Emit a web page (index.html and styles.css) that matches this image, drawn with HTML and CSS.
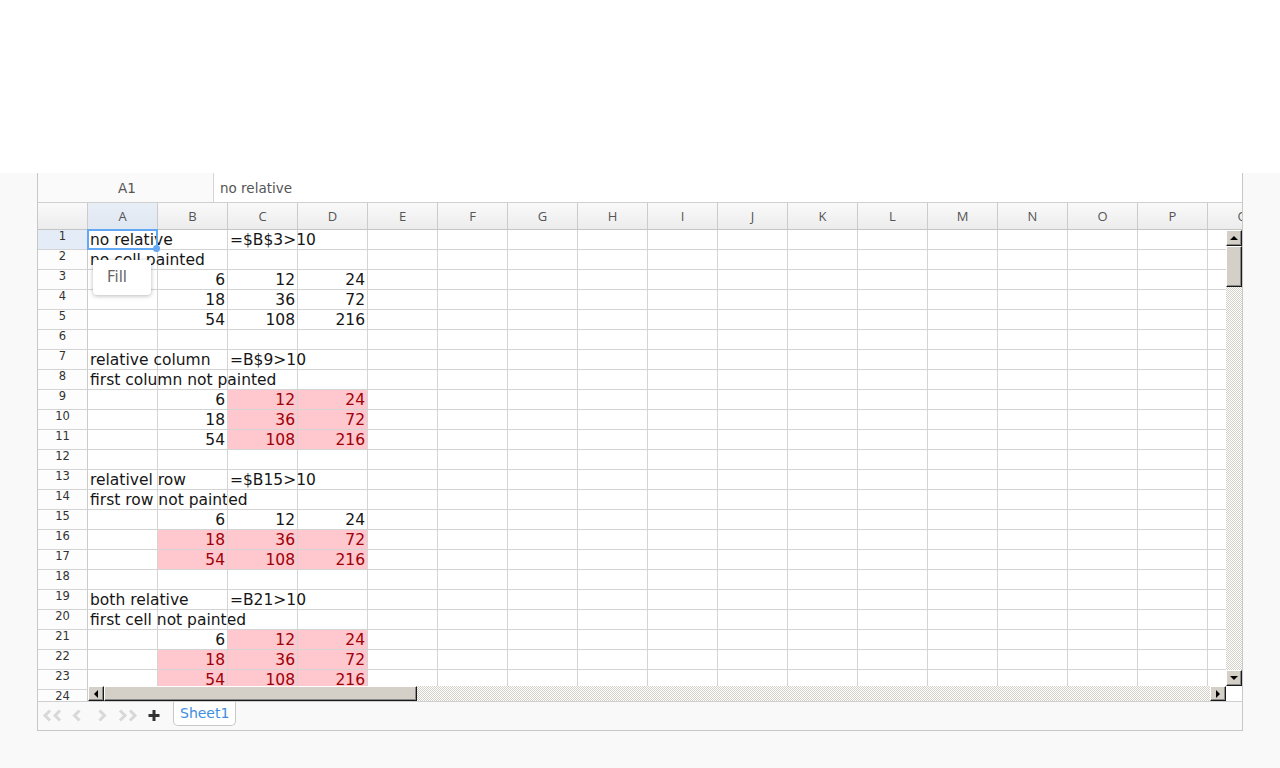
FILE: index.html
```html
<!DOCTYPE html>
<html>
<head>
<meta charset="utf-8">
<title>Sheet</title>
<link rel="stylesheet" href="styles.css">
</head>
<body>
<div class="top"></div>
<div class="stage">
  <div class="sheet">
    <div class="fbar">
      <div class="namebox">A1</div>
      <div class="formula">no relative</div>
    </div>
    <div class="view">
      <div class="grid">
        <div class="h corner"></div><div class="h hs">A</div><div class="h">B</div><div class="h">C</div><div class="h">D</div><div class="h">E</div><div class="h">F</div><div class="h">G</div><div class="h">H</div><div class="h">I</div><div class="h">J</div><div class="h">K</div><div class="h">L</div><div class="h">M</div><div class="h">N</div><div class="h">O</div><div class="h">P</div><div class="h">Q</div>

        <div class="r rs">1</div><div class="c sel">no relative<div class="selbox"></div><div class="handle"></div><div class="popup">Fill</div></div><div class="c"></div><div class="c">=$B$3&gt;10</div><div class="c"></div><div class="c"></div><div class="c"></div><div class="c"></div><div class="c"></div><div class="c"></div><div class="c"></div><div class="c"></div><div class="c"></div><div class="c"></div><div class="c"></div><div class="c"></div><div class="c"></div><div class="c"></div>
        <div class="r">2</div><div class="c">no cell painted</div><div class="c"></div><div class="c"></div><div class="c"></div><div class="c"></div><div class="c"></div><div class="c"></div><div class="c"></div><div class="c"></div><div class="c"></div><div class="c"></div><div class="c"></div><div class="c"></div><div class="c"></div><div class="c"></div><div class="c"></div><div class="c"></div>
        <div class="r">3</div><div class="c"></div><div class="c n">6</div><div class="c n">12</div><div class="c n">24</div><div class="c"></div><div class="c"></div><div class="c"></div><div class="c"></div><div class="c"></div><div class="c"></div><div class="c"></div><div class="c"></div><div class="c"></div><div class="c"></div><div class="c"></div><div class="c"></div><div class="c"></div>
        <div class="r">4</div><div class="c"></div><div class="c n">18</div><div class="c n">36</div><div class="c n">72</div><div class="c"></div><div class="c"></div><div class="c"></div><div class="c"></div><div class="c"></div><div class="c"></div><div class="c"></div><div class="c"></div><div class="c"></div><div class="c"></div><div class="c"></div><div class="c"></div><div class="c"></div>
        <div class="r">5</div><div class="c"></div><div class="c n">54</div><div class="c n">108</div><div class="c n">216</div><div class="c"></div><div class="c"></div><div class="c"></div><div class="c"></div><div class="c"></div><div class="c"></div><div class="c"></div><div class="c"></div><div class="c"></div><div class="c"></div><div class="c"></div><div class="c"></div><div class="c"></div>
        <div class="r">6</div><div class="c"></div><div class="c"></div><div class="c"></div><div class="c"></div><div class="c"></div><div class="c"></div><div class="c"></div><div class="c"></div><div class="c"></div><div class="c"></div><div class="c"></div><div class="c"></div><div class="c"></div><div class="c"></div><div class="c"></div><div class="c"></div><div class="c"></div>
        <div class="r">7</div><div class="c">relative column</div><div class="c"></div><div class="c">=B$9&gt;10</div><div class="c"></div><div class="c"></div><div class="c"></div><div class="c"></div><div class="c"></div><div class="c"></div><div class="c"></div><div class="c"></div><div class="c"></div><div class="c"></div><div class="c"></div><div class="c"></div><div class="c"></div><div class="c"></div>
        <div class="r">8</div><div class="c">first column not painted</div><div class="c"></div><div class="c"></div><div class="c"></div><div class="c"></div><div class="c"></div><div class="c"></div><div class="c"></div><div class="c"></div><div class="c"></div><div class="c"></div><div class="c"></div><div class="c"></div><div class="c"></div><div class="c"></div><div class="c"></div><div class="c"></div>
        <div class="r">9</div><div class="c"></div><div class="c n">6</div><div class="c n p">12</div><div class="c n p">24</div><div class="c"></div><div class="c"></div><div class="c"></div><div class="c"></div><div class="c"></div><div class="c"></div><div class="c"></div><div class="c"></div><div class="c"></div><div class="c"></div><div class="c"></div><div class="c"></div><div class="c"></div>
        <div class="r">10</div><div class="c"></div><div class="c n">18</div><div class="c n p">36</div><div class="c n p">72</div><div class="c"></div><div class="c"></div><div class="c"></div><div class="c"></div><div class="c"></div><div class="c"></div><div class="c"></div><div class="c"></div><div class="c"></div><div class="c"></div><div class="c"></div><div class="c"></div><div class="c"></div>
        <div class="r">11</div><div class="c"></div><div class="c n">54</div><div class="c n p">108</div><div class="c n p">216</div><div class="c"></div><div class="c"></div><div class="c"></div><div class="c"></div><div class="c"></div><div class="c"></div><div class="c"></div><div class="c"></div><div class="c"></div><div class="c"></div><div class="c"></div><div class="c"></div><div class="c"></div>
        <div class="r">12</div><div class="c"></div><div class="c"></div><div class="c"></div><div class="c"></div><div class="c"></div><div class="c"></div><div class="c"></div><div class="c"></div><div class="c"></div><div class="c"></div><div class="c"></div><div class="c"></div><div class="c"></div><div class="c"></div><div class="c"></div><div class="c"></div><div class="c"></div>
        <div class="r">13</div><div class="c">relativel row</div><div class="c"></div><div class="c">=$B15&gt;10</div><div class="c"></div><div class="c"></div><div class="c"></div><div class="c"></div><div class="c"></div><div class="c"></div><div class="c"></div><div class="c"></div><div class="c"></div><div class="c"></div><div class="c"></div><div class="c"></div><div class="c"></div><div class="c"></div>
        <div class="r">14</div><div class="c">first row not painted</div><div class="c"></div><div class="c"></div><div class="c"></div><div class="c"></div><div class="c"></div><div class="c"></div><div class="c"></div><div class="c"></div><div class="c"></div><div class="c"></div><div class="c"></div><div class="c"></div><div class="c"></div><div class="c"></div><div class="c"></div><div class="c"></div>
        <div class="r">15</div><div class="c"></div><div class="c n">6</div><div class="c n">12</div><div class="c n">24</div><div class="c"></div><div class="c"></div><div class="c"></div><div class="c"></div><div class="c"></div><div class="c"></div><div class="c"></div><div class="c"></div><div class="c"></div><div class="c"></div><div class="c"></div><div class="c"></div><div class="c"></div>
        <div class="r">16</div><div class="c"></div><div class="c n p">18</div><div class="c n p">36</div><div class="c n p">72</div><div class="c"></div><div class="c"></div><div class="c"></div><div class="c"></div><div class="c"></div><div class="c"></div><div class="c"></div><div class="c"></div><div class="c"></div><div class="c"></div><div class="c"></div><div class="c"></div><div class="c"></div>
        <div class="r">17</div><div class="c"></div><div class="c n p">54</div><div class="c n p">108</div><div class="c n p">216</div><div class="c"></div><div class="c"></div><div class="c"></div><div class="c"></div><div class="c"></div><div class="c"></div><div class="c"></div><div class="c"></div><div class="c"></div><div class="c"></div><div class="c"></div><div class="c"></div><div class="c"></div>
        <div class="r">18</div><div class="c"></div><div class="c"></div><div class="c"></div><div class="c"></div><div class="c"></div><div class="c"></div><div class="c"></div><div class="c"></div><div class="c"></div><div class="c"></div><div class="c"></div><div class="c"></div><div class="c"></div><div class="c"></div><div class="c"></div><div class="c"></div><div class="c"></div>
        <div class="r">19</div><div class="c">both relative</div><div class="c"></div><div class="c">=B21&gt;10</div><div class="c"></div><div class="c"></div><div class="c"></div><div class="c"></div><div class="c"></div><div class="c"></div><div class="c"></div><div class="c"></div><div class="c"></div><div class="c"></div><div class="c"></div><div class="c"></div><div class="c"></div><div class="c"></div>
        <div class="r">20</div><div class="c">first cell not painted</div><div class="c"></div><div class="c"></div><div class="c"></div><div class="c"></div><div class="c"></div><div class="c"></div><div class="c"></div><div class="c"></div><div class="c"></div><div class="c"></div><div class="c"></div><div class="c"></div><div class="c"></div><div class="c"></div><div class="c"></div><div class="c"></div>
        <div class="r">21</div><div class="c"></div><div class="c n">6</div><div class="c n p">12</div><div class="c n p">24</div><div class="c"></div><div class="c"></div><div class="c"></div><div class="c"></div><div class="c"></div><div class="c"></div><div class="c"></div><div class="c"></div><div class="c"></div><div class="c"></div><div class="c"></div><div class="c"></div><div class="c"></div>
        <div class="r">22</div><div class="c"></div><div class="c n p">18</div><div class="c n p">36</div><div class="c n p">72</div><div class="c"></div><div class="c"></div><div class="c"></div><div class="c"></div><div class="c"></div><div class="c"></div><div class="c"></div><div class="c"></div><div class="c"></div><div class="c"></div><div class="c"></div><div class="c"></div><div class="c"></div>
        <div class="r">23</div><div class="c"></div><div class="c n p">54</div><div class="c n p">108</div><div class="c n p">216</div><div class="c"></div><div class="c"></div><div class="c"></div><div class="c"></div><div class="c"></div><div class="c"></div><div class="c"></div><div class="c"></div><div class="c"></div><div class="c"></div><div class="c"></div><div class="c"></div><div class="c"></div>
        <div class="r">24</div><div class="c"></div><div class="c"></div><div class="c"></div><div class="c"></div><div class="c"></div><div class="c"></div><div class="c"></div><div class="c"></div><div class="c"></div><div class="c"></div><div class="c"></div><div class="c"></div><div class="c"></div><div class="c"></div><div class="c"></div><div class="c"></div><div class="c"></div>
      </div>
      <div class="vscroll">
        <div class="sbtn up"></div>
        <div class="thumb vthumb"></div>
        <div class="track"></div>
        <div class="sbtn down"></div>
      </div>
      <div class="hscroll">
        <div class="sbtn left"></div>
        <div class="thumb hthumb"></div>
        <div class="track"></div>
        <div class="sbtn right"></div>
      </div>
      <div class="scorner"></div>
    </div>
    <div class="tabs">
      <svg class="nav nav-first" width="21" height="13" viewBox="0 0 21 13"><path d="M9 1.5 4 6.5l5 5M19 1.5l-5 5 5 5" fill="none" stroke="#d8d8d8" stroke-width="3"/></svg>
      <svg class="nav nav-prev" width="10" height="13" viewBox="0 0 10 13"><path d="M7.5 1.5 2.5 6.5l5 5" fill="none" stroke="#d8d8d8" stroke-width="3"/></svg>
      <svg class="nav nav-next" width="10" height="13" viewBox="0 0 10 13"><path d="M2.5 1.5l5 5-5 5" fill="none" stroke="#d8d8d8" stroke-width="3"/></svg>
      <svg class="nav nav-last" width="21" height="13" viewBox="0 0 21 13"><path d="M2 1.5l5 5-5 5M12 1.5l5 5-5 5" fill="none" stroke="#d8d8d8" stroke-width="3"/></svg>
      <svg class="nav nav-add" width="12" height="13" viewBox="0 0 12 13"><path d="M6 1v11M0.5 6.5h11" fill="none" stroke="#333" stroke-width="3"/></svg>
      <div class="tab">Sheet1</div>
    </div>
  </div>
</div>
</body>
</html>
```
FILE: styles.css
```css
* { box-sizing: border-box; }
html, body { margin: 0; padding: 0; }
body {
  background: #f9f9f9;
  font-family: "DejaVu Sans", sans-serif;
}
.top { height: 173px; background: #fff; }
.stage { padding-left: 37px; }
.sheet {
  width: 1206px;
  border: 1px solid #c8c8c8;
  border-top: 0;
}
.fbar {
  display: flex;
  height: 30px;
  background: #fff;
  border-bottom: 1px solid #cfcfcf;
  font-size: 13.5px;
  color: #555;
}
.namebox {
  width: 176px;
  border-right: 1px solid #d4d4d4;
  background: #fafafa;
  display: flex;
  align-items: center;
  justify-content: center;
  padding-left: 3px;
}
.formula {
  display: flex;
  align-items: center;
  padding-left: 6px;
}
.view {
  position: relative;
  height: 498px;
  overflow: hidden;
  background: #fff;
}
.grid {
  display: grid;
  grid-template-columns: 50px repeat(17, 70px);
  grid-template-rows: 27px repeat(24, 20px);
  width: 1240px;
}
.h {
  border-right: 1px solid #cbcbcb;
  border-bottom: 1px solid #c4c4c4;
  background: linear-gradient(#f9f9f9, #ececec);
  font-family: "Open Sans", sans-serif;
  font-size: 13px;
  color: #555;
  display: flex;
  align-items: center;
  justify-content: center;
}
.h.hs { background: linear-gradient(#e8eef6, #dfe7f2); }
.r {
  border-right: 1px solid #cbcbcb;
  border-bottom: 1px solid #d4d4d4;
  background: #fdfdfd;
  font-size: 11.5px;
  line-height: 13px;
  color: #333;
  text-align: center;
}
.r.rs { background: #e4ecf7; }
.c {
  border-right: 1px solid #d4d4d4;
  border-bottom: 1px solid #d4d4d4;
  padding: 0 2px;
  white-space: nowrap;
  font-size: 15.5px;
  line-height: 20px;
  color: #161616;
}
.c.n { text-align: right; }
.c.p { background: #ffc7ce; color: #9c0006; }
.c.sel { position: relative; }
.selbox {
  position: absolute;
  left: -1px;
  top: -1px;
  width: 71px;
  height: 21px;
  border: 2px solid #64a8f4;
  z-index: 2;
}
.handle {
  position: absolute;
  left: 65px;
  top: 15px;
  width: 7px;
  height: 7px;
  border-radius: 50%;
  background: #64a8f4;
  z-index: 3;
}
.popup {
  position: absolute;
  left: 5px;
  top: 30px;
  width: 58px;
  height: 35px;
  padding-left: 14px;
  background: #fff;
  border-radius: 4px;
  box-shadow: 0 1px 4px rgba(0, 0, 0, 0.28);
  font-size: 15px;
  line-height: 35px;
  color: #666;
  z-index: 4;
}
.vscroll {
  position: absolute;
  left: 1188px;
  top: 27px;
  width: 16px;
  height: 456px;
  display: flex;
  flex-direction: column;
}
.hscroll {
  position: absolute;
  left: 50px;
  top: 483px;
  width: 1138px;
  height: 15px;
  display: flex;
}
.track {
  flex: 1;
  background: repeating-conic-gradient(#d4d0c8 0 25%, #fff 0 50%) 0 0 / 2px 2px;
}
.sbtn, .thumb {
  flex: none;
  background: #d4d0c8;
  border: 1px solid;
  border-color: #fff #1a1a1a #1a1a1a #fff;
  box-shadow: inset -1px -1px #8a8a8a;
  display: flex;
  align-items: center;
  justify-content: center;
}
.vscroll .sbtn { height: 16px; }
.hscroll .sbtn { width: 16px; }
.vthumb { height: 41px; }
.hthumb { width: 313px; }
.sbtn::after { content: ""; width: 0; height: 0; }
.up::after { border-left: 4px solid transparent; border-right: 4px solid transparent; border-bottom: 4px solid #000; }
.down::after { border-left: 4px solid transparent; border-right: 4px solid transparent; border-top: 4px solid #000; }
.left::after { border-top: 4px solid transparent; border-bottom: 4px solid transparent; border-right: 4px solid #000; }
.right::after { border-top: 4px solid transparent; border-bottom: 4px solid transparent; border-left: 4px solid #000; }
.scorner {
  position: absolute;
  left: 1188px;
  top: 483px;
  width: 16px;
  height: 15px;
  background: #fff;
}
.tabs {
  height: 29px;
  border-top: 1px solid #cfcfcf;
  display: flex;
  align-items: flex-start;
  background: #f9f9f9;
}
.nav { display: block; margin-top: 7px; flex: none; }
.nav-first { margin-left: 3px; }
.nav-prev { margin-left: 10px; }
.nav-next { margin-left: 15px; }
.nav-last { margin-left: 11px; }
.nav-add { margin-left: 9px; }
.tab {
  margin-left: 13px;
  height: 24px;
  padding: 0 6px;
  background: #fff;
  border: 1px solid #c8c8c8;
  border-top: 0;
  border-radius: 0 0 5px 5px;
  font-size: 14px;
  line-height: 22px;
  color: #3d8ee0;
}
```
